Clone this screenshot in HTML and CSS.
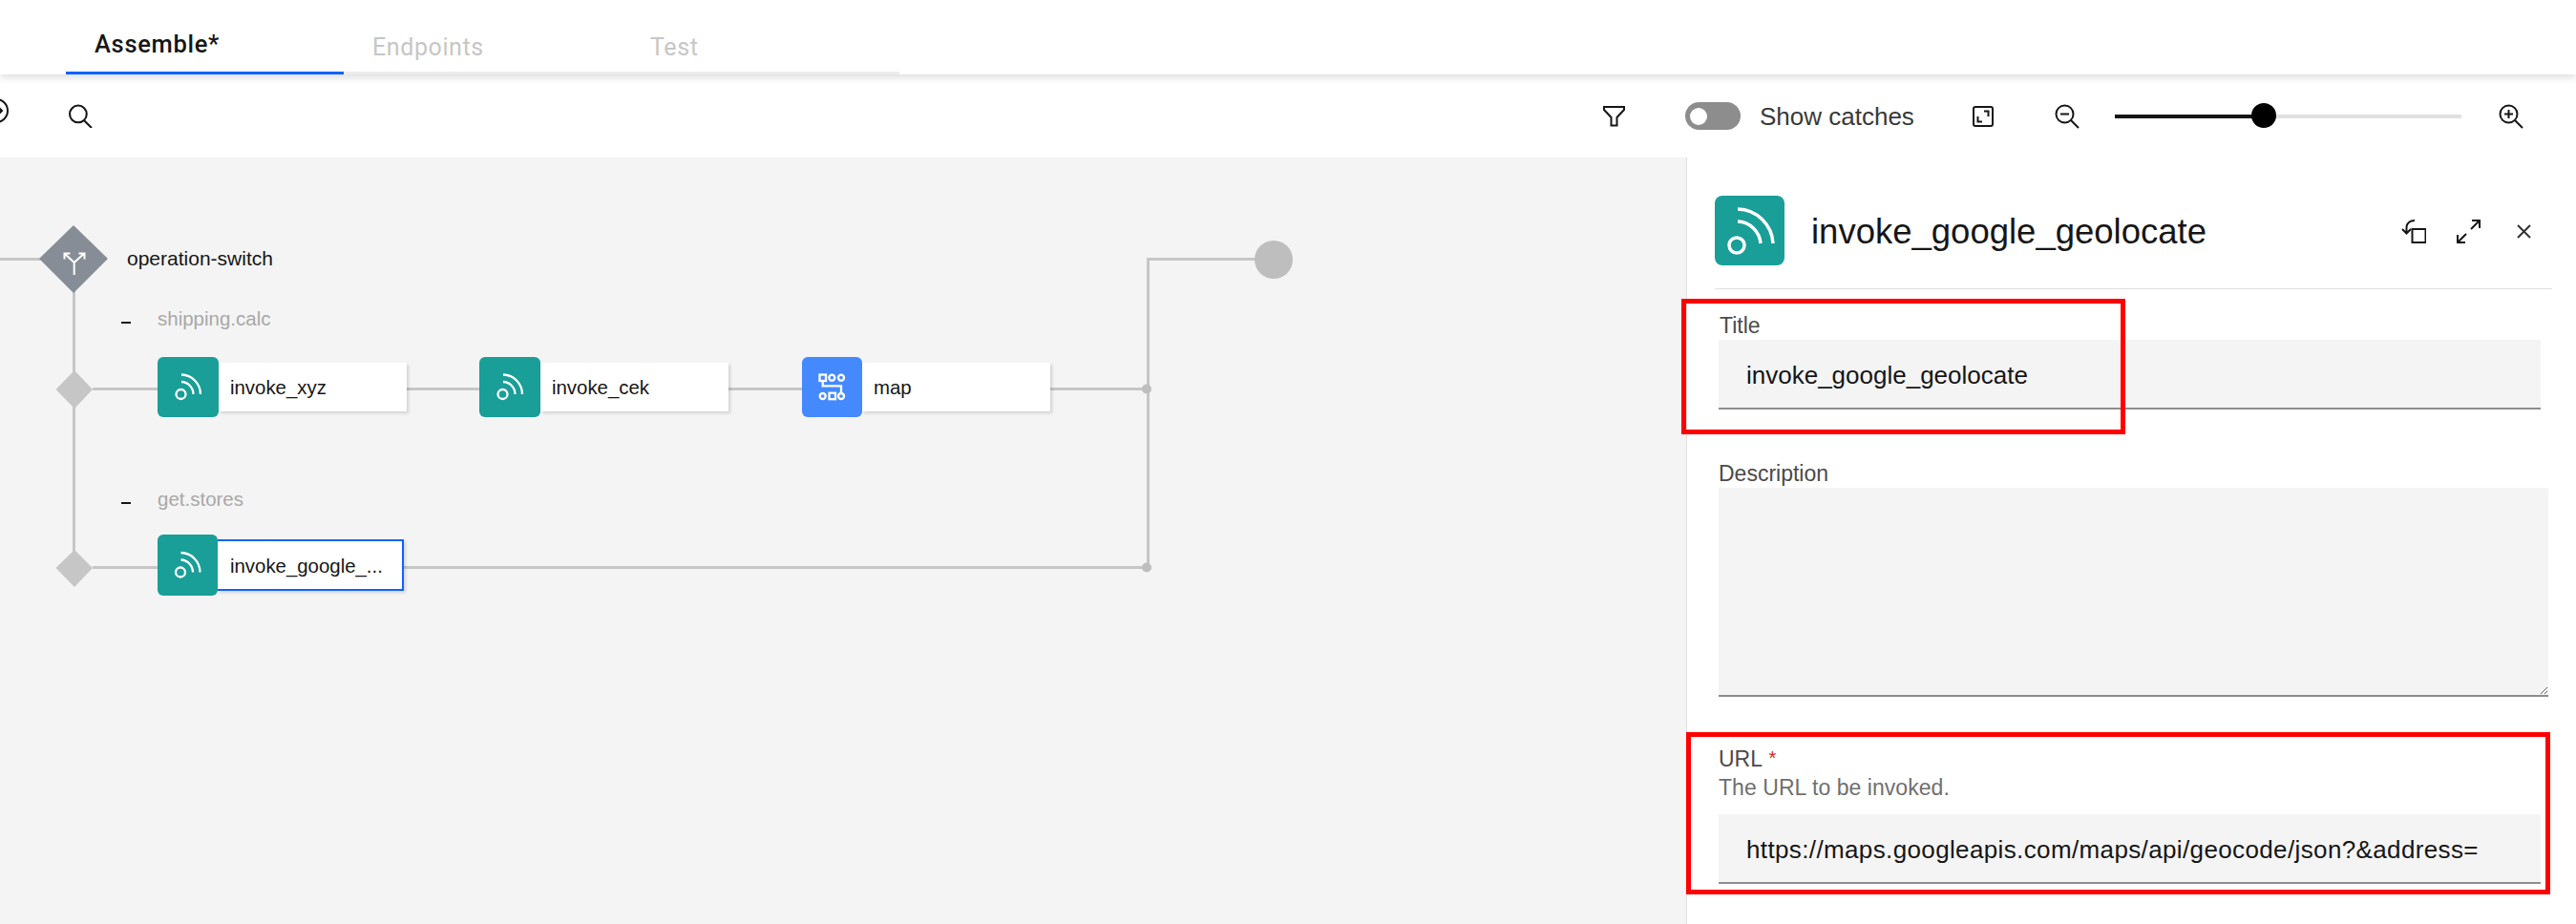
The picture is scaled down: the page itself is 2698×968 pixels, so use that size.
FILE: index.html
```html
<!DOCTYPE html>
<html lang="en">
<head>
<meta charset="utf-8">
<title>Assemble</title>
<link rel="stylesheet" href="styles.css">
</head>
<body>
<header class="tabs">
  <div class="tab tab-active">Assemble*</div>
  <div class="tab">Endpoints</div>
  <div class="tab">Test</div>
</header>

<section class="toolbar">
  <svg class="ic ic-run" viewBox="0 0 26 26"><circle cx="13" cy="13" r="12"/><path d="M6 13h13M15 9l4 4-4 4"/></svg>
  <svg class="ic ic-search" viewBox="0 0 24 24"><circle cx="9.5" cy="10" r="8.5"/><path d="M15.5 16.5L23 24"/></svg>
  <svg class="ic ic-filter" viewBox="0 0 25 24"><path d="M2 2h21v3l-7.5 8v8.500h-6V13L2 5z"/></svg>
  <div class="toggle"><span class="knob"></span></div>
  <span class="toggle-label">Show catches</span>
  <svg class="ic ic-frame" viewBox="0 0 22 22"><rect x="1" y="1" width="20" height="20" rx="2"/><path d="M12 5.500h4.500V11M10 16.500H5.500V11"/></svg>
  <svg class="ic ic-zoomout" viewBox="0 0 26 26"><circle cx="10.500" cy="10.500" r="9"/><path d="M17 17l8 8M6 10.500h9"/></svg>
  <div class="slider"><div class="slider-fill"></div><div class="slider-thumb"></div></div>
  <svg class="ic ic-zoomin" viewBox="0 0 26 26"><circle cx="10.500" cy="10.500" r="9"/><path d="M17 17l8 8M6 10.500h9M10.500 6v9"/></svg>
</section>

<main class="main">
  <div class="canvas">
    <svg class="wires" viewBox="0 165 1766 803">
      <g class="wire">
        <path d="M0 271.500H45M77.500 300V590M97 407.500H165M426 407.500H502M763 407.500H840M1100 407.500H1201M97 594.500H165M228 594.500H1201M1202.500 594.500V271.500H1320"/>
      </g>
      <polygon class="d-main" points="77,236 113,271 77,307 41,271"/>
      <path class="d-mark" d="M77.700 288V275L67.700 265.700M77.700 275L88 265.700M67.500 271.500V265.500H73.500M82.500 265.500H88.500V271.500"/>
      <polygon class="d-small" points="78,388 97,408 78,428 58.500,408"/>
      <polygon class="d-small" points="78,576 97,595 78,615 58.500,595"/>
      <circle class="d-dot" cx="1201" cy="407.500" r="5"/>
      <circle class="d-dot" cx="1201" cy="594.500" r="5"/>
      <circle class="d-dot" cx="1334" cy="272" r="20"/>
    </svg>

    <div class="lbl lbl-switch">operation-switch</div>
    <div class="case case-shipping"><span class="dash"></span>shipping.calc</div>
    <div class="case case-stores"><span class="dash"></span>get.stores</div>

    <div class="node node-xyz">
      <div class="node-icon teal"><svg viewBox="0 0 64 63"><circle cx="24.500" cy="39" r="5"/><path d="M25 26A13 13 0 0 1 37.500 39M25 18.500A20.500 20.500 0 0 1 45 39"/></svg></div>
      <div class="card">invoke_xyz</div>
    </div>
    <div class="node node-cek">
      <div class="node-icon teal"><svg viewBox="0 0 64 63"><circle cx="24.500" cy="39" r="5"/><path d="M25 26A13 13 0 0 1 37.500 39M25 18.500A20.500 20.500 0 0 1 45 39"/></svg></div>
      <div class="card">invoke_cek</div>
    </div>
    <div class="node node-map">
      <div class="node-icon blue"><svg viewBox="0 0 63 63"><rect x="18.500" y="18.500" width="6.500" height="6.500"/><circle cx="31.300" cy="21.700" r="3"/><circle cx="41" cy="21.700" r="3"/><circle cx="21.700" cy="41" r="3"/><rect x="28.500" y="37.700" width="6.500" height="6.500"/><circle cx="41" cy="41" r="3"/><path d="M21.700 25V30.300H41V38"/></svg></div>
      <div class="card">map</div>
    </div>
    <div class="node node-google">
      <div class="node-icon teal narrow"><svg viewBox="0 0 63 64"><circle cx="24" cy="39.500" r="5"/><path d="M24.500 26.500A13 13 0 0 1 37 39.500M24.500 19A20.500 20.500 0 0 1 44.500 39.500"/></svg></div>
      <div class="card card-selected">invoke_google_...</div>
    </div>
  </div>

  <aside class="panel">
    <div class="panel-head">
      <div class="panel-icon"><svg viewBox="0 0 73 73"><circle cx="23" cy="52" r="8"/><path d="M24 27A25 25 0 0 1 48 50M24 14A38 38 0 0 1 61 50"/></svg></div>
      <h2 class="panel-title">invoke_google_geolocate</h2>
      <svg class="ic ic-revert" viewBox="0 0 26 26"><rect x="11.500" y="10" width="14" height="14"/><path d="M14 1C9 1 5.500 4 5.500 8v5.500M1 10l4.500 4.500L10 10"/></svg>
      <svg class="ic ic-expand" viewBox="0 0 27 26"><path d="M2 25l9-9M16 11l9-9M17 2h8v8M2 17v8h8"/></svg>
      <svg class="ic ic-close" viewBox="0 0 15 15"><path d="M1 1l13 13M14 1L1 14"/></svg>
    </div>
    <div class="field field-title">
      <label class="f-label">Title</label>
      <div class="f-input">invoke_google_geolocate</div>
    </div>
    <div class="field field-desc">
      <label class="f-label">Description</label>
      <textarea class="f-area"></textarea>
    </div>
    <div class="field field-url">
      <label class="f-label">URL <span class="req">*</span></label>
      <div class="f-help">The URL to be invoked.</div>
      <div class="f-input f-input-url">https://maps.googleapis.com/maps/api/geocode/json?&amp;address=</div>
    </div>
  </aside>

  <div class="mark mark-title"></div>
  <div class="mark mark-url"></div>
</main>
</body>
</html>
```
FILE: styles.css
```css
* { box-sizing: border-box; }
html, body { margin: 0; padding: 0; }
body {
  width: 2698px;
  height: 968px;
  overflow: hidden;
  background: #fff;
  color: #161616;
  font-family: "Liberation Sans", Arial, sans-serif;
  display: flex;
  flex-direction: column;
}

/* tabs */
.tabs {
  flex: none;
  height: 78px;
  display: flex;
  padding-left: 69px;
  position: relative;
  z-index: 2;
  background: #fff;
  box-shadow: 0 3px 8px rgba(0, 0, 0, .14);
}
.tab {
  width: 291px;
  padding: 35px 0 0 30px;
  line-height: 30px;
  font-family: Roboto, sans-serif;
  font-size: 25px;
  letter-spacing: .6px;
  color: #c6c6c6;
  border-bottom: 3px solid #ececec;
}
.tab-active {
  padding-top: 31px;
  color: #161616;
  font-weight: 500;
  font-size: 25.500px;
  letter-spacing: .7px;
  border-bottom-color: #0f62fe;
}

/* toolbar */
.toolbar {
  flex: none;
  height: 87px;
  display: flex;
  align-items: center;
  background: #fff;
}
.ic { flex: none; display: block; fill: none; stroke: #161616; stroke-width: 2; }
.ic-run { width: 26px; height: 26px; margin-left: -17px; margin-top: -11px; }
.ic-search { width: 25px; height: 25px; margin-left: 63px; }
.ic-filter { width: 25px; height: 24px; margin-left: 1581px; }
.toggle {
  width: 58px;
  height: 29px;
  margin-left: 62px;
  border-radius: 15px;
  background: #8d8d8d;
  padding: 6px 0 0 5px;
}
.knob { display: block; width: 18px; height: 18px; border-radius: 50%; background: #fff; }
.toggle-label { margin-left: 20px; width: 161px; font-size: 26px; line-height: 30px; color: #393939; white-space: nowrap; }
.ic-frame { width: 22px; height: 22px; margin-left: 62px; }
.ic-zoomout { width: 26px; height: 26px; margin-left: 64px; }
.slider { position: relative; width: 363px; height: 4px; margin-left: 37px; background: #e0e0e0; }
.slider-fill { width: 156px; height: 4px; background: #161616; }
.slider-thumb {
  position: absolute;
  left: 143px;
  top: -12px;
  width: 26px;
  height: 26px;
  border-radius: 50%;
  background: #000;
}
.ic-zoomin { width: 26px; height: 26px; margin-left: 39px; }

/* main area */
.main { flex: 1; display: flex; position: relative; min-height: 0; }
.canvas { flex: 1; position: relative; background: #f4f4f4; overflow: hidden; }
.wires { position: absolute; left: 0; top: 0; width: 1766px; height: 803px; display: block; }
.wire path { fill: none; stroke: #c6c6c6; stroke-width: 3; }
.d-main { fill: #878d96; }
.d-mark { fill: none; stroke: #fff; stroke-width: 2; }
.d-small { fill: #c6c6c6; }
.d-dot { fill: #bebebe; }

.lbl, .case { position: absolute; white-space: nowrap; }
.lbl-switch { left: 133px; top: 94px; font-size: 21px; line-height: 24px; color: #161616; }
.case { font-size: 20.500px; line-height: 24px; color: #a8a8a8; }
.case-shipping { left: 165px; top: 157px; }
.case-stores { left: 165px; top: 346px; }
.dash {
  position: absolute;
  left: -38px;
  top: 15px;
  width: 10px;
  height: 2px;
  background: #161616;
}

.node { position: absolute; display: flex; align-items: center; }
.node-xyz { left: 165px; top: 209px; }
.node-cek { left: 502px; top: 209px; }
.node-map { left: 840px; top: 209px; }
.node-google { left: 165px; top: 395px; }
.node-icon { flex: none; width: 64px; height: 63px; border-radius: 6px; position: relative; z-index: 1; }
.node-icon svg { display: block; width: 100%; height: 100%; fill: none; stroke: #fff; stroke-width: 2.300; }
.node-map .node-icon { width: 63px; }
.node-google .node-icon { height: 64px; }
.narrow { width: 63px; }
.teal { background: #199e98; }
.blue { background: #4589ff; }
.card {
  width: 197px;
  height: 51px;
  padding: 2px 0 0 12px;
  display: flex;
  align-items: center;
  background: #fff;
  box-shadow: 2px 2px 3px rgba(0, 0, 0, .14);
  font-size: 20.400px;
  color: #161616;
  white-space: nowrap;
}
.card-selected { width: 195px; height: 54px; border: 2.500px solid #0f62fe; border-left: 0; padding-left: 13px; }

/* panel */
.panel {
  flex: none;
  width: 932px;
  padding: 40px 25px 0 33px;
  border-left: 1px solid #e0e0e0;
  background: #fff;
}
.panel-head {
  display: flex;
  align-items: center;
  margin-left: -4px;
  border-bottom: 1px solid #e0e0e0;
  padding-bottom: 24px;
  box-sizing: content-box;
  height: 73px;
}
.panel-icon { flex: none; width: 73px; height: 73px; border-radius: 8px; background: #199e98; }
.panel-icon svg { display: block; width: 73px; height: 73px; fill: none; stroke: #fff; stroke-width: 3.500; }
.panel-title { margin: 3px 0 0 28px; flex: 1; font-size: 36.500px; font-weight: 400; line-height: 44px; color: #161616; }
.ic-revert { width: 26px; height: 26px; margin-top: 3px; margin-left: -1px; }
.ic-expand { width: 27px; height: 26px; margin-left: 31px; }
.ic-close { width: 15px; height: 15px; margin-left: 37px; margin-right: 22px; stroke: #333; margin-top: 2px; }

.field-title { margin-top: 23px; }
.field-desc { margin-top: 52px; }
.field-url { margin-top: 50px; }
.f-label { display: block; font-size: 23px; line-height: 30px; height: 30px; color: #4a4a4a; }
.f-help { font-size: 23px; line-height: 30px; color: #6f6f6f; margin-bottom: 13px; letter-spacing: .05px; }
.req { color: #da1e28; font-size: 20px; line-height: 0; vertical-align: 2px; margin-left: 1px; }
.f-input {
  width: 861px;
  height: 73px;
  padding: 3px 0 0 29px;
  display: flex;
  align-items: center;
  background: #f4f4f4;
  border-bottom: 2px solid #8d8d8d;
  font-size: 26px;
  color: #161616;
  white-space: nowrap;
}
.f-input-url { letter-spacing: .37px; }
.field-title .f-label { text-indent: 1px; }
.f-area {
  display: block;
  width: 869px;
  height: 219px;
  padding: 0;
  margin: 0;
  border: 0;
  border-bottom: 2px solid #8d8d8d;
  border-radius: 0;
  outline: 0;
  background: #f4f4f4;
}

/* red annotation boxes */
.mark { position: absolute; border: 5px solid #f00; pointer-events: none; z-index: 3; }
.mark-title { left: 1761px; top: 148px; width: 465px; height: 142px; }
.mark-url { left: 1766px; top: 602px; width: 905px; height: 170px; }
```
